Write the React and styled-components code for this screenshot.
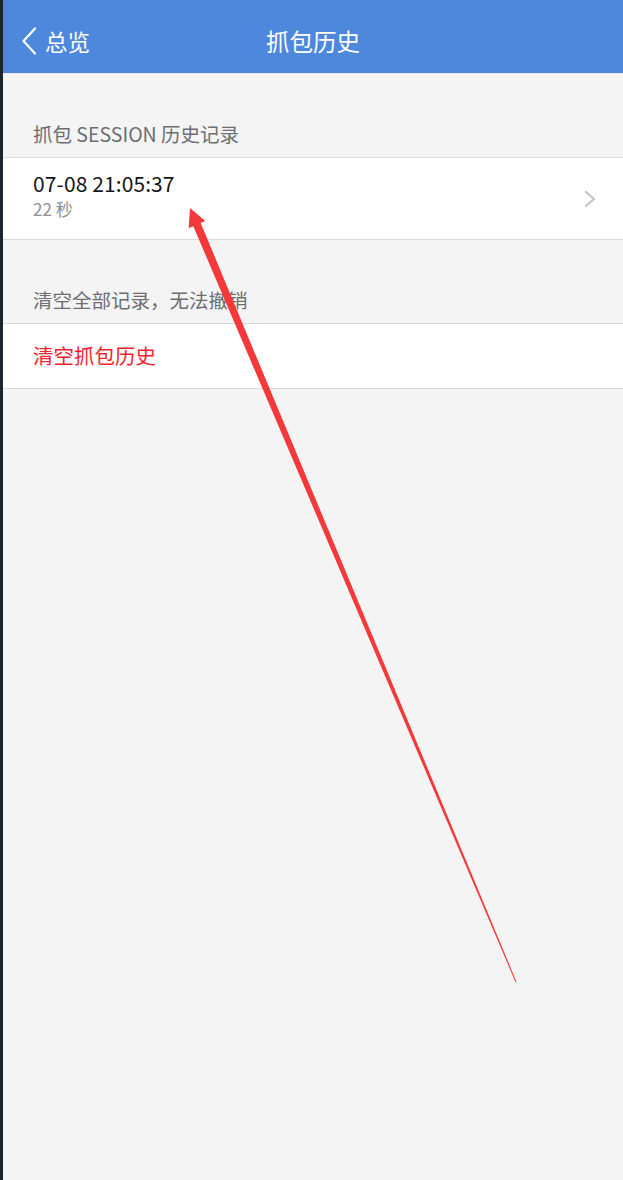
import React from "react";
import styled, { createGlobalStyle } from "styled-components";

const Global = createGlobalStyle`
  html, body {
    margin: 0;
    padding: 0;
    background: #1c2430;
  }
  body {
    font-family: "Noto Sans CJK SC", "Noto Sans", sans-serif;
  }
`;

const Frame = styled.div`
  position: relative;
  display: flex;
  width: 623px;
  height: 1180px;
  overflow: hidden;
`;

const Gutter = styled.div`
  width: 3px;
  flex: none;
  background: #1c2430;
`;

const Screen = styled.div`
  flex: 1;
  display: flex;
  flex-direction: column;
  background: #f4f4f4;
`;

const NavBar = styled.header`
  height: 74px;
  flex: none;
  box-sizing: border-box;
  padding-top: 8px;
  background: #4e88dc;
  display: grid;
  grid-template-columns: 1fr auto 1fr;
  align-items: center;
  color: #fff;
  border-bottom: 1px solid #e6e9ee;
`;

const Back = styled.div`
  display: flex;
  align-items: center;
  gap: 8px;
  padding-left: 18px;
  font-size: 22.5px;
  line-height: 30px;
`;

const Title = styled.h1`
  margin: 0;
  font-size: 23.5px;
  font-weight: 400;
  line-height: 30px;
`;

const SectionHeader = styled.div`
  height: 83px;
  box-sizing: border-box;
  display: flex;
  align-items: flex-end;
  padding: 0 30px 11px;
  font-size: 19.5px;
  line-height: 24px;
  color: #6d6d72;
`;

const Group = styled.div`
  background: #fff;
  border-top: 1px solid #d9d9d9;
  border-bottom: 1px solid #d9d9d9;
`;

const Row = styled.div`
  display: flex;
  align-items: center;
  padding: ${(p) => p.$pad || "0 30px"};
  min-height: ${(p) => p.$h}px;
  box-sizing: border-box;
`;

const RowText = styled.div`
  flex: 1;
  display: flex;
  flex-direction: column;
  padding-bottom: 8px;
`;

const RowTitle = styled.div`
  font-size: 21px;
  line-height: 28px;
  color: #161616;
  letter-spacing: 0.1px;
`;

const RowSub = styled.div`
  font-size: 17px;
  line-height: 24px;
  color: #8e8e93;
`;

const Danger = styled.div`
  font-size: 20.5px;
  line-height: 28px;
  color: #f2232c;
  padding-bottom: 3px;
`;

const Chevron = styled.svg`
  flex: none;
  margin-right: 27px;
`;

const Overlay = styled.svg`
  position: absolute;
  left: 0;
  top: 0;
  pointer-events: none;
`;

export default function App() {
  return (
    <>
      <Global />
      <Frame>
        <Gutter />
        <Screen>
          <NavBar>
            <Back>
              <svg width="16" height="28" viewBox="0 0 16 28">
                <path d="M14 1.5 L2.5 14 L14 26.5" fill="none" stroke="#fff" strokeWidth="2.2" strokeLinecap="round" strokeLinejoin="round" />
              </svg>
              <span>总览</span>
            </Back>
            <Title>抓包历史</Title>
            <div />
          </NavBar>
          <SectionHeader>抓包 SESSION 历史记录</SectionHeader>
          <Group>
            <Row $h={81} $pad="0 0 0 30px">
              <RowText>
                <RowTitle>07-08 21:05:37</RowTitle>
                <RowSub>22 秒</RowSub>
              </RowText>
              <Chevron width="12" height="18" viewBox="0 0 12 18">
                <path d="M2 2 L10 9 L2 16" fill="none" stroke="#c4c4c7" strokeWidth="2.2" strokeLinecap="round" strokeLinejoin="round" />
              </Chevron>
            </Row>
          </Group>
          <SectionHeader>清空全部记录，无法撤销</SectionHeader>
          <Group>
            <Row $h={64}>
              <Danger>清空抓包历史</Danger>
            </Row>
          </Group>
        </Screen>
        <Overlay width="623" height="1180" viewBox="0 0 623 1180">
          <polygon
            points="190,208 205.3,221.1 200.7,223 516.46,981.81 515.54,982.19 193.3,226.2 188.7,228.1"
            fill="#f5383a"
          />
        </Overlay>
      </Frame>
    </>
  );
}
